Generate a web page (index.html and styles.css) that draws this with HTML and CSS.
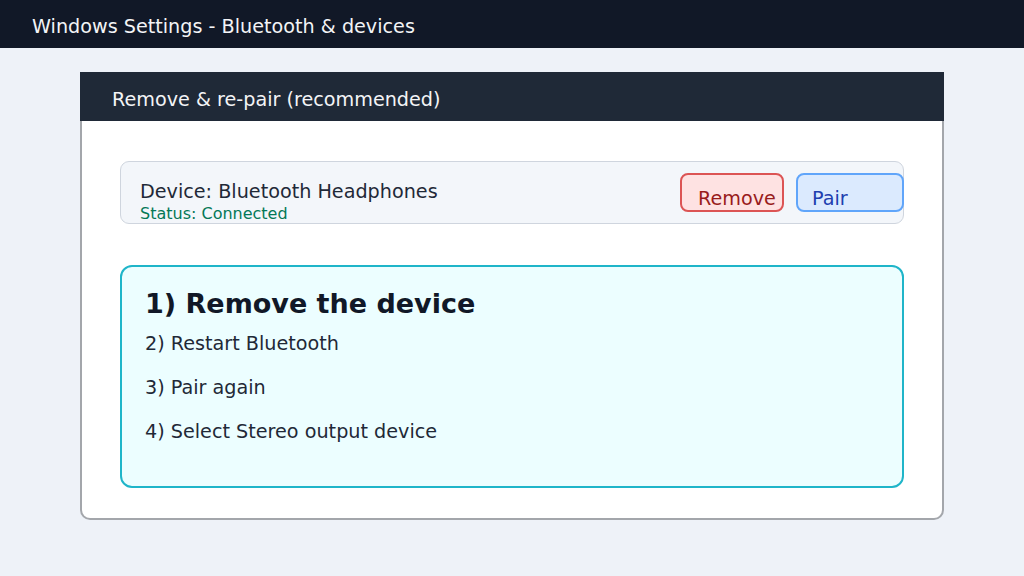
FILE: index.html
```html
<!DOCTYPE html>
<html>
<head>
<meta charset="utf-8">
<link rel="stylesheet" href="styles.css">
</head>
<body>
<div class="topbar">Windows Settings - Bluetooth &amp; devices</div>
<main class="main">
  <section class="card">
    <div class="card-header">Remove &amp; re-pair (recommended)</div>
    <div class="card-body">
      <div class="device-row">
        <div class="device-info">
          <div class="device-name">Device: Bluetooth Headphones</div>
          <div class="device-status">Status: Connected</div>
        </div>
        <div class="actions">
          <button class="btn btn-remove">Remove</button>
          <button class="btn btn-pair">Pair</button>
        </div>
      </div>
      <div class="steps">
        <div class="step-current">1) Remove the device</div>
        <div class="step">2) Restart Bluetooth</div>
        <div class="step">3) Pair again</div>
        <div class="step">4) Select Stereo output device</div>
      </div>
    </div>
  </section>
</main>
</body>
</html>
```
FILE: styles.css
```css
* { box-sizing: border-box; }
html, body {
  margin: 0;
  padding: 0;
  background: #eef2f8;
  font-family: "DejaVu Sans", sans-serif;
  color: #111827;
}
.topbar {
  height: 48px;
  background: #111827;
  color: #f3f4f6;
  font-size: 19.2px;
  line-height: 24px;
  padding: 15px 0 0 32px;
}
.main {
  padding: 24px 80px 0 80px;
}
.card {
  width: 864px;
  height: 448px;
  background: #ffffff;
  border: 2px solid #a3a6ab;
  border-top: none;
  border-radius: 0 0 10px 10px;
}
.card-header {
  height: 49px;
  margin: 0 -2px;
  background: #1f2937;
  color: #f3f4f6;
  font-size: 19.2px;
  line-height: 24px;
  padding: 16px 0 0 32px;
}
.card-body {
  padding: 40px 38px 0 38px;
}
.device-row {
  display: flex;
  justify-content: space-between;
  align-items: flex-start;
  height: 63px;
  background: #f3f6fa;
  border: 1px solid #cfd5de;
  border-radius: 9px;
  padding: 18px 0 0 19px;
}
.device-name {
  font-size: 19.2px;
  line-height: 24px;
  color: #1f2937;
}
.device-status {
  font-size: 16px;
  line-height: 19px;
  margin-top: 0;
  color: #047857;
}
.actions {
  display: flex;
  gap: 12px;
  margin-top: -7px;
  margin-right: -1px;
}
.btn {
  height: 39px;
  border: 2px solid;
  border-radius: 8px;
  font-family: "DejaVu Sans", sans-serif;
  font-size: 19.2px;
  line-height: 24px;
  padding: 12px 0 0 16px;
  text-align: left;
  vertical-align: top;
}
.btn-remove {
  width: 104px;
  background: #fee2e2;
  border-color: #dc5454;
  color: #991b1b;
}
.btn-pair {
  width: 108px;
  background: #dbeafe;
  border-color: #60a5fa;
  color: #1e40af;
  padding-left: 14px;
}
.steps {
  margin-top: 41px;
  height: 223px;
  background: #ecfeff;
  border: 2px solid #1fb5c9;
  border-radius: 12px;
  padding: 21px 23px 0 23px;
}
.step-current {
  font-size: 27px;
  font-weight: bold;
  line-height: 32px;
  color: #111827;
  margin-bottom: 2px;
}
.step {
  font-size: 19.2px;
  line-height: 44px;
  color: #1f2937;
}
```
